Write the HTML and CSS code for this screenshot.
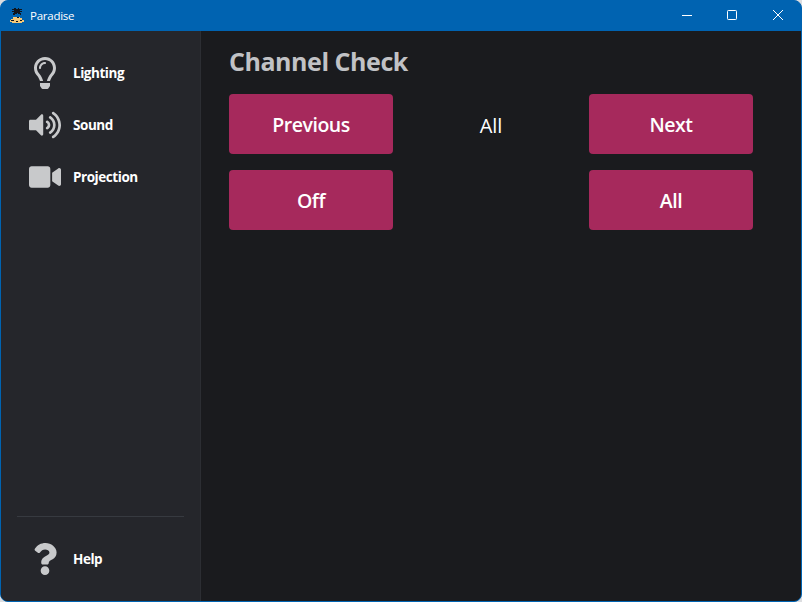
FILE: index.html
```html
<!DOCTYPE html>
<html lang="en">
<head>
<meta charset="utf-8">
<title>Paradise</title>
<link rel="stylesheet" href="styles.css">
</head>
<body>
<div class="window">
  <header class="titlebar">
    <svg class="app-icon" width="16" height="16" viewBox="0 0 16 16">
      <path fill="#10151c" d="M5 0h2v1h2V0h1v1h3v1h-2v1h2v1h-2v1h1v2h-1V6H9V5H8v1H6v1H4V5h1V4H3V3h2V2H3V1h2z"/>
      <path fill="#f6c877" d="M4 9h7v1h2v2h2v2h-2v1H3v-1H1v-2h1v-1h2z"/>
      <path fill="#10151c" d="M8 9h2v1H8zM2 12h3v1H2zM7 13h2v1H7zM11 12h2v1h-2z"/>
    </svg>
    <span class="app-name">Paradise</span>
    <div class="controls">
      <svg width="46" height="30" viewBox="0 0 46 30"><path d="M18 15.5h10"/></svg>
      <svg width="46" height="30" viewBox="0 0 46 30"><rect x="17.5" y="10.5" width="9" height="9" rx=".8"/></svg>
      <svg width="46" height="30" viewBox="0 0 46 30"><path d="M17 10l10 10M27 10l-10 10"/></svg>
    </div>
  </header>
  <div class="body">
    <nav class="sidebar">
      <a class="item">
        <svg class="icon" viewBox="0 0 352 512"><path d="M176 80c-52.94 0-96 43.06-96 96 0 8.84 7.16 16 16 16s16-7.16 16-16c0-35.3 28.72-64 64-64 8.84 0 16-7.16 16-16s-7.16-16-16-16zM96.06 459.17c0 3.15.93 6.22 2.68 8.84l24.51 36.84c2.97 4.46 7.97 7.14 13.32 7.14h78.85c5.36 0 10.36-2.68 13.32-7.14l24.51-36.84c1.74-2.62 2.67-5.7 2.68-8.84l.05-43.18H96.02l.04 43.18zM176 0C73.72 0 0 82.97 0 176c0 44.37 16.45 84.85 43.56 115.78 16.64 18.99 42.74 58.8 52.42 92.16v.06h48v-.12c-.01-4.77-.72-9.51-2.15-14.07-5.59-17.81-22.82-64.77-62.17-109.67-20.54-23.43-31.52-53.15-31.61-84.14-.2-73.64 59.67-128 127.95-128 70.58 0 128 57.42 128 128 0 30.97-11.24 60.85-31.65 84.14-39.11 44.61-56.42 91.47-62.1 109.46a47.507 47.507 0 0 0-2.22 14.3v.1h48v-.05c9.68-33.37 35.78-73.18 52.42-92.16C335.55 260.85 352 220.37 352 176 352 78.8 273.2 0 176 0z"/></svg>
        <span>Lighting</span>
      </a>
      <a class="item">
        <svg class="icon" viewBox="0 0 576 512"><path d="M215.03 71.05L126.06 160H24c-13.26 0-24 10.74-24 24v144c0 13.25 10.74 24 24 24h102.06l88.97 88.95c15.03 15.03 40.97 4.47 40.97-16.97V88.02c0-21.46-25.96-31.98-40.97-16.97zm233.32-51.08c-11.17-7.33-26.18-4.24-33.51 6.95-7.34 11.17-4.22 26.18 6.95 33.51 66.27 43.49 105.82 116.6 105.82 195.58 0 78.98-39.55 152.09-105.82 195.58-11.17 7.32-14.29 22.34-6.95 33.5 7.04 10.71 21.93 14.56 33.51 6.95C528.27 439.58 576 351.33 576 256S528.27 72.43 448.35 19.97zM480 256c0-63.53-32.06-121.94-85.77-156.24-11.19-7.14-26.03-3.82-33.12 7.46s-3.78 26.21 7.41 33.36C408.27 165.97 432 209.11 432 256s-23.73 90.02-63.48 115.42c-11.19 7.14-14.5 22.07-7.41 33.36 6.51 10.36 21.12 15.14 33.12 7.46C447.94 377.94 480 319.54 480 256zm-141.77-76.87c-11.58-6.33-26.19-2.16-32.61 9.45-6.39 11.61-2.16 26.2 9.45 32.61C327.98 228.28 336 241.63 336 256c0 14.38-8.02 27.72-20.92 34.81-11.61 6.41-15.84 21-9.45 32.61 6.43 11.66 21.05 15.8 32.61 9.45 28.23-15.55 45.77-45 45.77-76.88s-17.54-61.32-45.78-76.86z"/></svg>
        <span>Sound</span>
      </a>
      <a class="item">
        <svg class="icon" viewBox="0 0 576 512"><path d="M336.2 64H47.8C21.4 64 0 85.4 0 111.8v288.4C0 426.6 21.4 448 47.8 448h288.4c26.4 0 47.8-21.4 47.8-47.8V111.8c0-26.4-21.4-47.8-47.8-47.8zm189.4 37.7L416 177.3v157.4l109.6 75.5c21.2 14.6 50.4-.3 50.4-25.8V127.5c0-25.4-29.1-40.4-50.4-25.8z"/></svg>
        <span>Projection</span>
      </a>
      <div class="footer">
        <a class="item">
          <svg class="icon" viewBox="0 0 384 512"><path d="M202.021 0C122.202 0 70.503 32.703 29.914 91.026c-7.363 10.58-5.093 25.086 5.178 32.874l43.138 32.709c10.373 7.865 25.132 6.026 33.253-4.148 25.049-31.381 43.63-49.449 82.757-49.449 30.764 0 68.816 19.799 68.816 49.631 0 22.552-18.617 34.134-48.993 51.164-35.423 19.86-82.299 44.576-82.299 106.405V320c0 13.255 10.745 24 24 24h72.471c13.255 0 24-10.745 24-24v-5.773c0-42.86 125.268-44.645 125.268-160.627C377.504 66.256 286.902 0 202.021 0zM192 373.459c-38.196 0-69.271 31.075-69.271 69.271 0 38.195 31.075 69.27 69.271 69.27s69.271-31.075 69.271-69.271-31.075-69.27-69.271-69.27z"/></svg>
          <span>Help</span>
        </a>
      </div>
    </nav>
    <main class="content">
      <h1>Channel Check</h1>
      <div class="grid">
        <button class="btn">Previous</button>
        <div class="status">All</div>
        <button class="btn">Next</button>
        <button class="btn">Off</button>
        <div></div>
        <button class="btn">All</button>
      </div>
    </main>
  </div>
</div>
</body>
</html>
```
FILE: styles.css
```css
* { box-sizing: border-box; }
html { background: #dcdde0; }
body {
  margin: 0;
  font-family: "Open Sans", "Noto Sans", sans-serif;
  color: #fff;
}
.window {
  width: 802px;
  height: 602px;
  border: 1px solid #0063b1;
  border-radius: 8px;
  overflow: hidden;
  display: flex;
  flex-direction: column;
  background: #0063b1;
}
.titlebar {
  height: 30px;
  flex: none;
  display: flex;
  align-items: center;
  padding-left: 8px;
}
.app-icon { shape-rendering: crispEdges; }
.app-name {
  margin-left: 5px;
  padding-bottom: 2px;
  font-size: 11.5px;
  letter-spacing: -0.25px;
}
.controls {
  display: flex;
  margin-left: auto;
}
.controls svg {
  fill: none;
  stroke: #fff;
  stroke-width: 1;
  transform: translate(1px, -1px);
}
.body {
  flex: 1;
  display: flex;
  min-height: 0;
  background: #1a1b1e;
}
.sidebar {
  width: 200px;
  padding: 16px;
  display: flex;
  flex-direction: column;
  background: #25262b;
  border-right: 1px solid #2c2e33;
}
.item {
  height: 52px;
  padding: 0 12px;
  display: flex;
  align-items: center;
  gap: 12px;
  font-size: 13.5px;
  font-weight: 700;
  letter-spacing: -0.45px;
}
.icon {
  width: 32px;
  height: 32px;
  fill: #c8c9cb;
}
.footer {
  margin-top: auto;
  padding-top: 16px;
  border-top: 1px solid #373a40;
}
.content {
  flex: 1;
  padding: 13px 48px 0 28px;
}
h1 {
  margin: 0 0 15px;
  font-size: 25px;
  line-height: 35px;
  font-weight: 700;
  letter-spacing: -0.45px;
  color: #c1c2c5;
}
.grid {
  display: grid;
  grid-template-columns: repeat(3, 164px);
  grid-auto-rows: 60px;
  gap: 16px;
}
.btn {
  padding: 0;
  border: 0;
  border-radius: 4px;
  background: #a6295c;
  color: #fff;
  font: 600 19.5px "Open Sans", "Noto Sans", sans-serif;
  letter-spacing: -0.45px;
}
.status {
  display: flex;
  align-items: center;
  justify-content: center;
  padding-top: 2px;
  font-size: 20px;
}
```
